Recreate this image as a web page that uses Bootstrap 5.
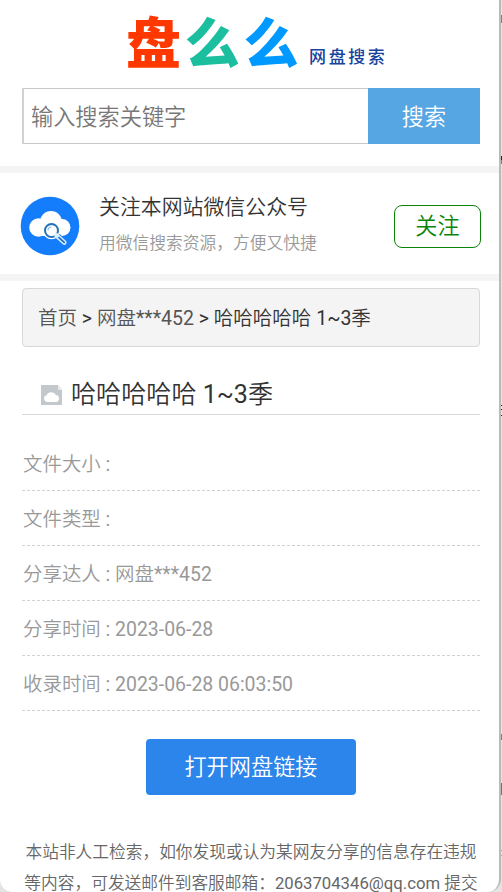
<!DOCTYPE html>
<html lang="zh-CN">
<head>
<meta charset="utf-8">
<meta name="viewport" content="width=device-width, initial-scale=1">
<title>盘么么 - 网盘搜索</title>
<link href="https://cdn.jsdelivr.net/npm/bootstrap@5.3.0/dist/css/bootstrap.min.css" rel="stylesheet">
<style>
html { overflow: hidden; }
body { height: 892px; overflow: hidden; background: #e4e4e4; font-family: Roboto, "Noto Sans CJK SC DemiLight", "Noto Sans CJK SC", sans-serif; color: #333; }
.screen { width: 501px; height: 892px; border-right: 2px solid #bababa; border-radius: 0 0 13px 13px; }
.site-head { height: 173px; border-bottom: 7px solid #f4f4f4; padding: 0 19px 0 22px; }
.logo { height: 88px; padding-left: 104px; }
.logo-big { font-family: "Noto Sans CJK SC", sans-serif; font-size: 55px; line-height: 76px; font-weight: 900; padding-top: 1px; }
.logo-big span { display: inline-block; width: 58.7px; }
.c-red { color: #ff3800; } .c-green { color: #1bbfa0; } .c-blue { color: #0099ff; }
.logo-small { font-family: "Noto Sans CJK SC", sans-serif; font-size: 17px; line-height: 26px; letter-spacing: 2.6px; color: #17439c; font-weight: 500; margin: 43px 0 0 7px; }
.search { height: 56px; }
.search .form-control { font-size: 22.2px; border: 1px solid #c8c8c8; border-left-width: 2px; border-left-color: #d2d2d2; border-right: 0; padding: 3px 7px 0; color: #777; }
.search .form-control::placeholder { color: #777; opacity: 1; }
.search .btn { width: 112px; background: #56a6e3; color: #fff; font-size: 22.2px; border: 0; padding: 9px 0 5px; }
.wechat { height: 108px; border-bottom: 7px solid #f4f4f4; padding: 5px 18px 0 20px; }
.wechat-name { font-size: 20.9px; line-height: 32px; margin-top: -5px; }
.wechat-sub { font-size: 16.75px; line-height: 26px; color: #999; margin-top: 7px; }
.wechat-text { padding-left: 19px; }
.follow { width: 87px; height: 43px; border: 1.5px solid #0a850a; border-radius: 8px; color: #0a850a; font-size: 22.2px; line-height: 1; }
.content { padding: 7px 19px 0 22px; }
.crumbs { height: 59px; background: #f4f4f4; border: 1px solid #d8d8d8; border-radius: 4px; font-size: 19.5px; padding: 3px 15px 0; white-space: pre; }
.crumbs a { color: #555; }
.file-title { height: 68px; border-bottom: 1px solid #d8d8d8; font-size: 25.1px; line-height: 38px; padding: 0 0 0 19px; }
.meta { padding-top: 21px; font-size: 19.45px; color: #999; }
.meta li { height: 55px; border-bottom: 1px dashed #d2d2d2; padding: 4px 0 0 1px; }
.open-link { width: 210px; height: 56px; margin-top: 28px; background: #2b85ea; color: #fff; font-size: 22.2px; border: 0; border-radius: 4px; }
.open-link span { display: block; padding-top: 2px; }
.notice { margin: 42px 0 0 0; font-size: 16.72px; line-height: 30.5px; color: #666; white-space: nowrap; }
.edge { top: 0; right: 0; }
</style>
</head>
<body>
<div class="screen bg-white overflow-hidden">
  <header class="site-head">
    <div class="logo d-flex align-items-start">
      <div class="logo-big d-flex"><span class="c-red">盘</span><span class="c-green">么</span><span class="c-blue">么</span></div>
      <div class="logo-small text-nowrap">网盘搜索</div>
    </div>
    <form class="search d-flex">
      <input class="form-control rounded-0 shadow-none" type="text" placeholder="输入搜索关键字">
      <button class="btn rounded-0 flex-shrink-0" type="button">搜索</button>
    </form>
  </header>
  <section class="wechat d-flex align-items-center">
    <svg width="60" height="60" viewBox="0 0 60 60" class="flex-shrink-0">
      <circle cx="30" cy="30" r="29.3" fill="#147dfc"/>
      <g fill="#fff"><circle cx="18.5" cy="31.5" r="9.3"/><circle cx="31" cy="26" r="11"/><circle cx="42" cy="31.5" r="8.5"/><path d="M18 29h25v11H18z"/></g>
      <path d="M37.5 41l7.5 6.5" stroke="#147dfc" stroke-width="7.5" stroke-linecap="round"/>
      <circle cx="31.5" cy="34.5" r="8.7" fill="#fff"/>
      <circle cx="31.5" cy="34.5" r="6.5" fill="#fff" stroke="#2471ba" stroke-width="2"/>
      <path d="M28 34.5a3.5 3.5 0 0 1 3.5-3.5" fill="none" stroke="#8dbde9" stroke-width="1.2"/>
      <path d="M36.5 39.5l7.8 7" stroke="#d8edff" stroke-width="4.6" stroke-linecap="round"/>
      <path d="M39 41.7l5.2 4.7" stroke="#2471ba" stroke-width="1.8" stroke-linecap="round"/>
    </svg>
    <div class="flex-grow-1 wechat-text">
      <div class="wechat-name">关注本网站微信公众号</div>
      <div class="wechat-sub">用微信搜索资源，方便又快捷</div>
    </div>
    <button class="btn follow p-0 flex-shrink-0" type="button">关注</button>
  </section>
  <main class="content">
    <nav class="crumbs d-flex align-items-center"><div><a href="#" class="text-decoration-none">首页</a> &gt; <a href="#" class="text-decoration-none">网盘***452</a> &gt; 哈哈哈哈哈 1~3季</div></nav>
    <div class="file-title d-flex align-items-end">
      <svg width="22" height="21" viewBox="0 0 22 21" class="me-2 mb-2">
        <path d="M0 0h17l4 5v15H0z" fill="#c2c8cc"/><path d="M17 0v5h4z" fill="#e5e7e9"/>
        <path d="M6 17a3.5 3.5 0 0 1-.5-6.8A5.3 5.3 0 0 1 15 10a3.6 3.6 0 0 1 .5 7z" fill="#fff"/>
      </svg>
      <div>哈哈哈哈哈 1~3季</div>
    </div>
    <ul class="meta list-unstyled mb-0">
      <li class="d-flex align-items-center">文件大小 :</li>
      <li class="d-flex align-items-center">文件类型 :</li>
      <li class="d-flex align-items-center">分享达人 : 网盘***452</li>
      <li class="d-flex align-items-center">分享时间 : 2023-06-28</li>
      <li class="d-flex align-items-center">收录时间 : 2023-06-28 06:03:50</li>
    </ul>
    <div class="text-center"><button class="btn open-link p-0" type="button"><span>打开网盘链接</span></button></div>
    <div class="notice text-center">本站非人工检索，如你发现或认为某网友分享的信息存在违规<br>等内容，可发送邮件到客服邮箱：2063704346@qq.com 提交</div>
  </main>
</div>
<svg class="edge position-absolute" width="2" height="892" viewBox="0 0 2 892">
  <path d="M1 15h1v8H1z" fill="#1bb394"/><path d="M1 156h1v4H1zM1 405h1v1H1zM1 409h1v1H1zM1 415h1v1H1z" fill="#23272b"/><path d="M1 160h1v4H1zM1 734h1v6H1z" fill="#5a87c0"/><path d="M1 783h1v12H1z" fill="#8b6b4d"/><path d="M1 850h1v1H1zM1 855h1v1H1z" fill="#aaa"/>
</svg>
<script src="https://cdn.jsdelivr.net/npm/bootstrap@5.3.0/dist/js/bootstrap.bundle.min.js"></script>
</body>
</html>
